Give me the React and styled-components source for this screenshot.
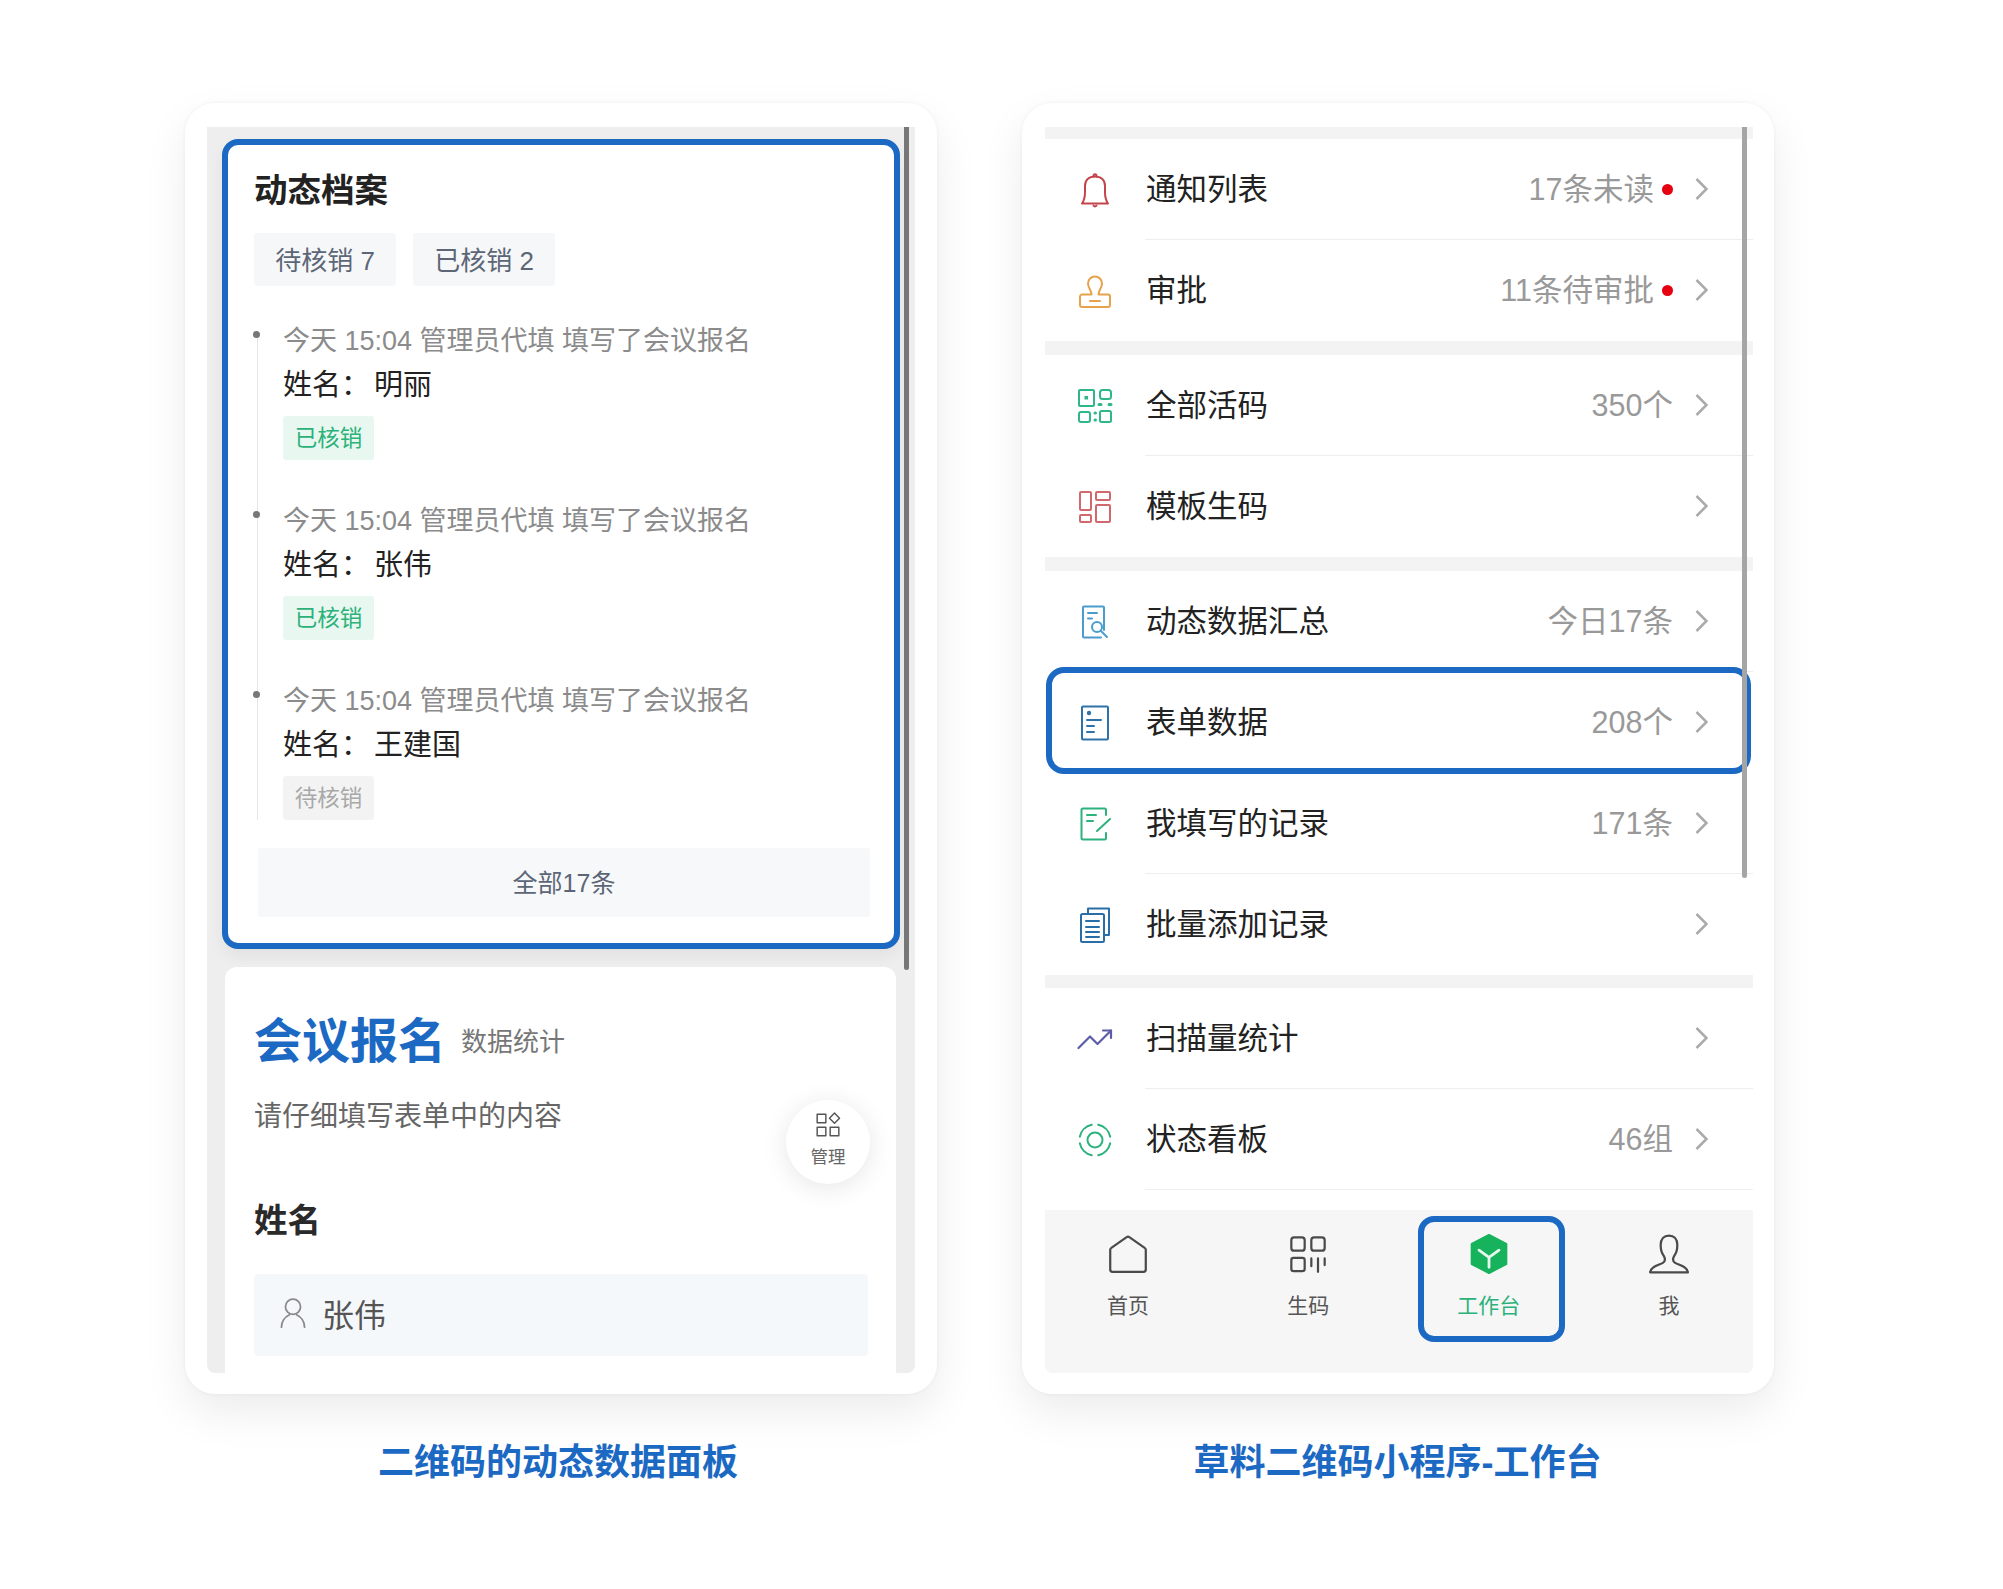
import React from 'react';
import styled, { createGlobalStyle } from 'styled-components';

const BLUE = '#1b69c3';

const GlobalStyle = createGlobalStyle`
  html, body {
    margin: 0;
    padding: 0;
    background: #fff;
  }
  body {
    font-family: "Liberation Sans", "Noto Sans CJK SC", sans-serif;
  }
`;

const Page = styled.div`
  box-sizing: border-box;
  width: 2003px;
  height: 1589px;
  padding: 103px 0 0 185px;
  display: flex;
  gap: 85px;
  overflow: hidden;
`;

const Column = styled.div`
  width: 752px;
  display: flex;
  flex-direction: column;
`;

const Card = styled.div`
  box-sizing: border-box;
  height: 1291px;
  padding: 24px 0 21px ${p => p.$inset}px;
  background: #fff;
  border-radius: 30px;
  box-shadow: 0 18px 44px rgba(0, 0, 0, 0.08), 0 0 4px rgba(0, 0, 0, 0.05);
`;

const Screen = styled.div`
  position: relative;
  width: 708px;
  height: 1246px;
  display: flex;
  flex-direction: column;
  background: ${p => p.$bg};
  border-radius: 0 0 8px 8px;
  overflow: hidden;
`;

const Scrollbar = styled.div`
  position: absolute;
  top: 0;
  right: 6px;
  width: 5px;
  height: ${p => p.$height}px;
  background: ${p => p.$color};
  border-radius: 0 0 3px 3px;
  z-index: 3;
`;

const Caption = styled.div`
  margin-top: 44px;
  font-size: 36px;
  line-height: 50px;
  font-weight: 700;
  color: ${BLUE};
  text-align: center;
  margin-left: ${p => p.$shift}px;
`;

/* left phone */
const BlueFrame = styled.section`
  box-sizing: border-box;
  height: 810px;
  margin: 12px 15px 0;
  padding: 24px 0 0 26px;
  background: #fff;
  border: 6px solid ${BLUE};
  border-radius: 16px;
  box-shadow: 0 8px 16px rgba(0, 0, 0, 0.05);
`;

const Title = styled.h2`
  margin: 0;
  font-size: 33.5px;
  line-height: 44px;
  font-weight: 700;
  color: #222;
`;

const Chips = styled.div`
  display: flex;
  gap: 17px;
  margin-top: 20px;
`;

const Chip = styled.div`
  box-sizing: border-box;
  width: 142px;
  height: 53px;
  padding-bottom: 3px;
  display: flex;
  align-items: center;
  justify-content: center;
  background: #f6f7f8;
  border-radius: 3px;
  font-size: 26px;
  color: #5c6677;
`;

const Timeline = styled.div`
  position: relative;
  margin: 37px 0 0 3px;
  padding-left: 26px;

  &::before {
    content: '';
    position: absolute;
    left: 0;
    top: 12px;
    bottom: 0;
    width: 1px;
    background: #e6e6e6;
  }
`;

const Entry = styled.div`
  position: relative;
  padding-bottom: ${p => (p.$last ? 0 : 43)}px;
`;

const Dot = styled.span`
  position: absolute;
  left: -30px;
  top: 8px;
  width: 7px;
  height: 7px;
  border-radius: 50%;
  background: #777;
`;

const Meta = styled.div`
  font-size: 27px;
  line-height: 36px;
  color: #8b8b8b;
  white-space: nowrap;
`;

const Name = styled.div`
  margin-top: 6px;
  font-size: 29px;
  line-height: 40px;
  color: #222;

  span {
    margin-left: 4px;
  }
`;

const Tag = styled.div`
  box-sizing: border-box;
  margin-top: 11px;
  width: 91px;
  height: 44px;
  padding-bottom: 5px;
  display: flex;
  align-items: center;
  justify-content: center;
  border-radius: 3px;
  font-size: 22.5px;
  color: ${p => (p.$done ? '#2bb27a' : '#a8a8a8')};
  background: ${p => (p.$done ? '#e8f7f0' : '#f3f3f3')};
`;

const AllButton = styled.div`
  box-sizing: border-box;
  width: 612px;
  height: 69px;
  padding-bottom: 4px;
  margin: 28px 0 0 4px;
  display: flex;
  align-items: center;
  justify-content: center;
  background: #f7f8f9;
  border-radius: 3px;
  font-size: 25px;
  color: #5c6677;
`;

const FormCard = styled.section`
  position: relative;
  flex: 1;
  margin: 18px 19px 0 18px;
  padding: 45px 28px 0 29px;
  background: #fff;
  border-radius: 12px 12px 0 0;
`;

const FormHead = styled.div`
  display: flex;
  align-items: center;
  gap: 15px;
`;

const FormTitle = styled.h1`
  margin: 0;
  font-size: 48px;
  line-height: 60px;
  font-weight: 700;
  color: ${BLUE};
`;

const FormSub = styled.span`
  padding-bottom: 6px;
  font-size: 26px;
  color: #777;
`;

const FormDesc = styled.p`
  margin: 25px 0 0;
  font-size: 28px;
  line-height: 40px;
  color: #666;
`;

const FieldLabel = styled.div`
  margin-top: 62px;
  font-size: 33.5px;
  line-height: 44px;
  font-weight: 700;
  color: #2a2a2a;
`;

const Field = styled.div`
  box-sizing: border-box;
  height: 82px;
  margin-top: 31px;
  padding: 0 0 4px 23px;
  display: flex;
  align-items: center;
  gap: 13px;
  background: #f5f8fb;
  border-radius: 4px;
  font-size: 32px;
  color: #555;
`;

const Fab = styled.div`
  position: absolute;
  left: 561px;
  top: 133px;
  width: 84px;
  height: 84px;
  border-radius: 50%;
  background: #fff;
  box-shadow: 0 4px 26px rgba(0, 0, 0, 0.1);
  display: flex;
  flex-direction: column;
  align-items: center;
  padding-top: 12px;
  box-sizing: border-box;
  gap: 8px;
  font-size: 17.5px;
  line-height: 22px;
  color: #666;
`;

/* right phone */
const Group = styled.div`
  margin-top: ${p => p.$gap}px;
  background: #fff;
`;

const Row = styled.div`
  position: relative;
  height: 101px;
  display: flex;

  ${p =>
    p.$highlight &&
    `&::after {
      content: '';
      position: absolute;
      left: 1px;
      right: 2px;
      top: -5px;
      bottom: -1px;
      border: 6px solid ${BLUE};
      border-radius: 18px;
      z-index: 2;
    }`}
`;

const IconSlot = styled.div`
  width: 100px;
  flex: none;
  display: flex;
  align-items: center;
  justify-content: center;
`;

const RowBody = styled.div`
  flex: 1;
  display: flex;
  align-items: center;
  padding-right: 45px;
  border-bottom: 1px solid ${p => (p.$line ? '#eeeeee' : 'transparent')};
`;

const RowLabel = styled.div`
  flex: 1;
  padding: 0 0 4px 1px;
  font-size: 30.5px;
  color: #222;
`;

const RowValue = styled.div`
  padding-bottom: 4px;
  font-size: 30.5px;
  color: #999;
  white-space: nowrap;
`;

const RedDot = styled.span`
  width: 11px;
  height: 11px;
  margin-left: 8px;
  border-radius: 50%;
  background: #e60012;
`;

const Chevron = styled.svg`
  width: 13px;
  height: 24px;
  margin-left: 22px;
  flex: none;
`;

const Filler = styled.div`
  flex: 1;
  background: #fff;
`;

const TabBar = styled.nav`
  height: 163px;
  padding: 0 24px 0 23px;
  display: flex;
  justify-content: space-between;
  background: #f6f6f6;
`;

const Tab = styled.div`
  position: relative;
  width: 120px;
  padding-top: 25px;
  display: flex;
  flex-direction: column;
  align-items: center;
  font-size: 21px;
  line-height: 30px;
  color: ${p => (p.$active ? '#2bb27a' : '#555')};

  ${p =>
    p.$active &&
    `&::after {
      content: '';
      position: absolute;
      left: -11px;
      right: -16px;
      top: 6px;
      height: 126px;
      box-sizing: border-box;
      border: 6px solid ${BLUE};
      border-radius: 16px;
    }`}
`;

const TabIcon = styled.div`
  width: 44px;
  height: 38px;
  margin-bottom: 18px;
  display: flex;
  align-items: center;
  justify-content: center;
`;

const Svg = ({ size = 36, color, width = 2, children }) => (
  <svg
    width={size}
    height={size}
    viewBox="0 0 36 36"
    fill="none"
    stroke={color}
    strokeWidth={width}
    strokeLinecap="round"
    strokeLinejoin="round"
  >
    {children}
  </svg>
);

const BellIcon = () => (
  <Svg color="#c4444c">
    <path d="M5 31.500C7.500 28 8 25 8 20v-6c0-6 4-9.500 10-9.500S28 8 28 14v6c0 5 .5 8 3 11.500H5z" />
    <path d="M16.500 4.500c0-3 3-3 3 0M16.500 33.500c.8 1.300 2.200 1.300 3 0" />
  </Svg>
);

const StampIcon = () => (
  <Svg color="#e6a24c">
    <path d="M14.500 21.500c0-4.500-3.500-6-3.500-11a7 7 0 0 1 14 0c0 5-3.500 6.500-3.500 11H31a2 2 0 0 1 2 2V32a2 2 0 0 1-2 2H5a2 2 0 0 1-2-2v-8.500a2 2 0 0 1 2-2z" />
    <path d="M13 28h10" />
  </Svg>
);

const QrIcon = () => (
  <Svg color="#2eb88a">
    <rect x="2" y="2" width="15" height="16" rx="1" />
    <rect x="7.500" y="8" width="3.500" height="3.500" fill="#2eb88a" stroke="none" />
    <rect x="23" y="2" width="11" height="9" rx="2.500" />
    <rect x="2" y="24" width="11" height="10" rx="2" />
    <rect x="23" y="23" width="11" height="11" rx="1.500" />
    <path d="M22 16.500h2M32 16.500h2M18 25h.5M18 32h.5" strokeWidth="3" />
  </Svg>
);

const TemplateIcon = () => (
  <Svg color="#d0686d">
    <rect x="3" y="3" width="11" height="18" rx="1" />
    <rect x="19" y="3" width="14" height="8" rx="1" />
    <rect x="3" y="26" width="11" height="7" rx="1" />
    <rect x="19" y="16" width="14" height="17" rx="1" />
  </Svg>
);

const SearchDocIcon = () => (
  <Svg color="#4a9ccc">
    <path d="M27 26V3.500a1 1 0 0 0-1-1H7a1 1 0 0 0-1 1V32.500a1 1 0 0 0 1 1h17" />
    <path d="M11 9h9M11 14.500h4" />
    <circle cx="20" cy="23" r="5" />
    <path d="M24 27l6 6" />
  </Svg>
);

const FormIcon = () => (
  <Svg color="#2f72a8">
    <rect x="5" y="1.500" width="26" height="33" rx="1" />
    <circle cx="12" cy="8" r="2.200" fill="#2f72a8" stroke="none" />
    <path d="M10 15h14M10 21h7M10 27h7" />
  </Svg>
);

const EditIcon = () => (
  <Svg color="#2db27e">
    <path d="M29 9V4a1.500 1.500 0 0 0-1.500-1.500H6A1.500 1.500 0 0 0 4.500 4v28A1.500 1.500 0 0 0 6 33.500h21.500A1.500 1.500 0 0 0 29 32v-5" />
    <path d="M10 9h9M10 15h6M20 25l13-12" />
  </Svg>
);

const CopyIcon = () => (
  <Svg color="#2a6ea8">
    <path d="M11 7V1.500h21V28h-5" />
    <rect x="4" y="7" width="23" height="28" rx="1.500" />
    <path d="M9 14h13M9 20h13M9 25h13M9 30h13" />
  </Svg>
);

const TrendIcon = () => (
  <Svg color="#5c5ca8" width={2.2}>
    <path d="M1.500 27L13 15.500l7.500 7.500L34 9.500" />
    <path d="M26 9.500h8V17" />
  </Svg>
);

const RingIcon = () => (
  <Svg color="#2db27e">
    <circle cx="18" cy="18" r="7.500" />
    <path d="M21.200 2.800A15.500 15.500 0 0 1 33.200 14.800M33.200 21.200A15.500 15.500 0 0 1 21.200 33.200M14.800 33.200A15.500 15.500 0 0 1 2.800 21.200M2.800 14.800A15.500 15.500 0 0 1 14.800 2.800" />
  </Svg>
);

const HomeIcon = () => (
  <Svg size={40} color="#4a4a4a">
    <path d="M16.800 2.800a2 2 0 0 1 2.400 0L33 12.500a2 2 0 0 1 1 1.700V32a2 2 0 0 1-2 2H4a2 2 0 0 1-2-2V14.200a2 2 0 0 1 1-1.700z" />
  </Svg>
);

const CodeIcon = () => (
  <Svg size={40} color="#4a4a4a">
    <rect x="3" y="3" width="12" height="12" rx="2.500" />
    <rect x="21" y="3" width="12" height="12" rx="2.500" />
    <rect x="3" y="21.500" width="12" height="12" rx="2" />
    <path d="M21 22v7M27 22v12M33 22v6" />
  </Svg>
);

const BoxIcon = () => (
  <svg width="40" height="40" viewBox="0 0 36 36">
    <path d="M18 1L33.500 9v18L18 35 2.500 27V9z" fill="#17b35c" stroke="#17b35c" strokeWidth="2" strokeLinejoin="round" />
    <path d="M9 14.500l9 6.500 9-6.500M18 21v9" fill="none" stroke="#e8f8ee" strokeWidth="2.500" strokeLinecap="round" strokeLinejoin="round" />
  </svg>
);

const PersonIcon = () => (
  <Svg size={40} color="#4a4a4a">
    <path d="M1 34.500C1.500 29 9 28 12.500 26C15 24.500 14.500 22 13.500 20C11 17 10.500 13 10.500 10C10.500 4.500 13.500 1.500 18 1.500C22.500 1.500 25.500 4.500 25.500 10C25.500 13 25 17 22.500 20C21.500 22 21 24.500 23.500 26C27 28 34.500 29 35 34.500Z" />
  </Svg>
);

const ManageIcon = () => (
  <Svg size={26} color="#555" width={2}>
    <rect x="3" y="3" width="12" height="12" />
    <path d="M27 1.500l7 7-7 7-7-7z" />
    <rect x="3" y="21" width="12" height="12" />
    <rect x="21" y="21" width="12" height="12" />
  </Svg>
);

const UserIcon = () => (
  <Svg size={32} color="#8a8a8a" width={2}>
    <circle cx="18" cy="11" r="8.500" />
    <path d="M5 34c0-9 5-12 9-14M31 34c0-9-5-12-9-14" />
  </Svg>
);

const entries = [
  { name: '明丽', done: true },
  { name: '张伟', done: true },
  { name: '王建国', done: false },
];

const groups = [
  {
    gap: 12,
    rows: [
      { icon: BellIcon, label: '通知列表', value: '17条未读', dot: true },
      { icon: StampIcon, label: '审批', value: '11条待审批', dot: true },
    ],
  },
  {
    gap: 14,
    rows: [
      { icon: QrIcon, label: '全部活码', value: '350个' },
      { icon: TemplateIcon, label: '模板生码' },
    ],
  },
  {
    gap: 14,
    rows: [
      { icon: SearchDocIcon, label: '动态数据汇总', value: '今日17条' },
      { icon: FormIcon, label: '表单数据', value: '208个', highlight: true },
      { icon: EditIcon, label: '我填写的记录', value: '171条' },
      { icon: CopyIcon, label: '批量添加记录' },
    ],
  },
  {
    gap: 13,
    trailingLine: true,
    rows: [
      { icon: TrendIcon, label: '扫描量统计' },
      { icon: RingIcon, label: '状态看板', value: '46组' },
    ],
  },
];

const tabs = [
  { icon: HomeIcon, label: '首页' },
  { icon: CodeIcon, label: '生码' },
  { icon: BoxIcon, label: '工作台', active: true },
  { icon: PersonIcon, label: '我' },
];

const App = () => (
  <>
    <GlobalStyle />
    <Page>
      <Column>
        <Card $inset={22}>
          <Screen $bg="#eeeeef">
            <Scrollbar $height={843} $color="#777" />
            <BlueFrame>
              <Title>动态档案</Title>
              <Chips>
                <Chip>待核销 7</Chip>
                <Chip>已核销 2</Chip>
              </Chips>
              <Timeline>
                {entries.map((entry, i) => (
                  <Entry key={entry.name} $last={i === entries.length - 1}>
                    <Dot />
                    <Meta>今天 15:04 管理员代填 填写了会议报名</Meta>
                    <Name>
                      姓名：<span>{entry.name}</span>
                    </Name>
                    <Tag $done={entry.done}>{entry.done ? '已核销' : '待核销'}</Tag>
                  </Entry>
                ))}
              </Timeline>
              <AllButton>全部17条</AllButton>
            </BlueFrame>
            <FormCard>
              <FormHead>
                <FormTitle>会议报名</FormTitle>
                <FormSub>数据统计</FormSub>
              </FormHead>
              <FormDesc>请仔细填写表单中的内容</FormDesc>
              <Fab>
                <ManageIcon />
                管理
              </Fab>
              <FieldLabel>姓名</FieldLabel>
              <Field>
                <UserIcon />
                张伟
              </Field>
            </FormCard>
          </Screen>
        </Card>
        <Caption $shift={-6}>二维码的动态数据面板</Caption>
      </Column>

      <Column>
        <Card $inset={23}>
          <Screen $bg="#f3f3f3">
            <Scrollbar $height={751} $color="#a5a5a5" />
            {groups.map(group => (
              <Group key={group.rows[0].label} $gap={group.gap}>
                {group.rows.map((row, i) => {
                  const Icon = row.icon;
                  const line = group.trailingLine || i < group.rows.length - 1;
                  return (
                    <Row key={row.label} $highlight={row.highlight}>
                      <IconSlot>
                        <Icon />
                      </IconSlot>
                      <RowBody $line={line && !row.highlight}>
                        <RowLabel>{row.label}</RowLabel>
                        {row.value && <RowValue>{row.value}</RowValue>}
                        {row.dot && <RedDot />}
                        <Chevron viewBox="0 0 13 24" fill="none" stroke="#aaa" strokeWidth="2.500">
                          <path d="M1.500 2l10 10-10 10" />
                        </Chevron>
                      </RowBody>
                    </Row>
                  );
                })}
              </Group>
            ))}
            <Filler />
            <TabBar>
              {tabs.map(tab => {
                const Icon = tab.icon;
                return (
                  <Tab key={tab.label} $active={tab.active}>
                    <TabIcon>
                      <Icon />
                    </TabIcon>
                    {tab.label}
                  </Tab>
                );
              })}
            </TabBar>
          </Screen>
        </Card>
        <Caption $shift={-1}>草料二维码小程序-工作台</Caption>
      </Column>
    </Page>
  </>
);

export default App;
